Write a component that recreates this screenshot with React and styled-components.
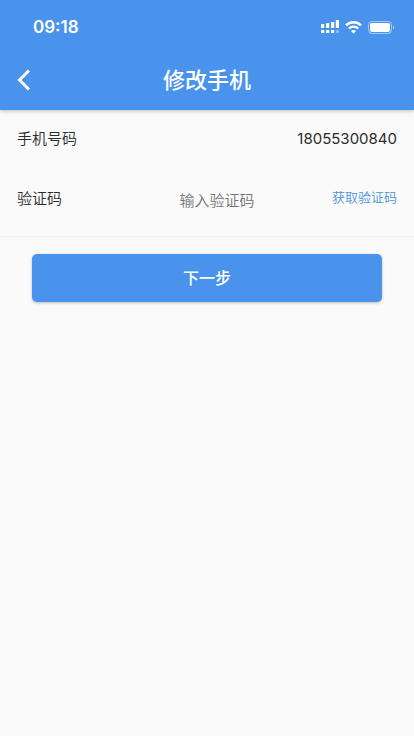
import React, { useState } from "react";
import styled, { createGlobalStyle } from "styled-components";

const GlobalStyle = createGlobalStyle`
  * {
    box-sizing: border-box;
  }
  body {
    margin: 0;
    background-color: #fafafa;
    color: #2b2b2b;
    font-family: Inter, "Noto Sans CJK SC", sans-serif;
    font-size: 15px;
  }
  button,
  input {
    font-family: inherit;
  }
`;

const Header = styled.header`
  background-color: #4a93ec;
  color: white;
  box-shadow: 0 1px 4px rgba(0, 0, 0, 0.25);
`;

const StatusBar = styled.div`
  height: 50px;
  padding: 4px 19px 0 33px;
  display: flex;
  align-items: center;
  justify-content: space-between;
`;

const Time = styled.span`
  font-size: 17px;
  font-weight: 600;
`;

const StatusIcons = styled.div`
  display: flex;
  align-items: center;
  gap: 6px;
`;

const NavBar = styled.div`
  height: 60px;
  padding: 0 10px;
  display: grid;
  grid-template-columns: 48px 1fr 48px;
  align-items: center;
`;

const BackButton = styled.button`
  height: 48px;
  padding: 0 0 0 6px;
  border: none;
  background: none;
  color: white;
  display: flex;
  align-items: center;
  cursor: pointer;
`;

const Title = styled.h1`
  margin: 0;
  font-size: 22px;
  font-weight: 500;
  line-height: 32px;
  text-align: center;
`;

const Form = styled.form`
  display: block;
`;

const Fields = styled.div`
  padding: 0 17px 6px;
  border-bottom: 1px solid #eeeeee;
`;

const Row = styled.div`
  height: 60px;
  padding-bottom: 2px;
  display: flex;
  align-items: center;
  justify-content: space-between;
`;

const Label = styled.label`
  min-width: 85px;
  font-weight: 350;
  line-height: 22px;
`;

const Phone = styled.output`
  line-height: 22px;
`;

const CodeInput = styled.input`
  flex: 1;
  min-width: 0;
  height: 40px;
  padding: 2px 0 0;
  border: none;
  outline: none;
  background: none;
  color: inherit;
  font-size: 15px;
  font-weight: 350;
  text-align: center;
  &::placeholder {
    color: #757575;
    opacity: 1;
  }
`;

const CodeButton = styled.button`
  padding: 0 0 4px;
  border: none;
  background: none;
  color: #4a93dc;
  font-size: 13px;
  font-weight: 350;
  line-height: 20px;
  white-space: nowrap;
  cursor: pointer;
`;

const Actions = styled.div`
  padding: 17px 32px;
`;

const NextButton = styled.button`
  width: 100%;
  height: 48px;
  padding: 0 0 2px;
  border: none;
  border-radius: 5px;
  background-color: #4a93ec;
  color: white;
  font-size: 16px;
  font-weight: 500;
  box-shadow: 0 1px 3px rgba(0, 0, 0, 0.25);
  cursor: pointer;
`;

const SignalIcon = () => (
  <svg width="18" height="14" viewBox="0 0 18 14" fill="white" aria-hidden="true">
    <rect x="0" y="4" width="3.2" height="4" rx="0.6" />
    <rect x="5" y="3" width="3.2" height="5" rx="0.6" />
    <rect x="10" y="2" width="3.2" height="6" rx="0.6" />
    <rect x="14.8" y="0" width="3.2" height="8" rx="0.6" />
    <rect x="0" y="10" width="3.2" height="3" rx="0.6" />
    <rect x="5" y="10" width="3.2" height="3" rx="0.6" />
    <rect x="10" y="10" width="3.2" height="3" rx="0.6" />
    <rect x="14.8" y="10" width="3.2" height="3" rx="0.6" opacity="0.35" />
  </svg>
);

const WifiIcon = () => (
  <svg width="17" height="13" viewBox="0 0 17 13" fill="none" stroke="white" aria-hidden="true">
    <path d="M1 4.4a10.8 10.8 0 0 1 15 0" strokeWidth="2.5" />
    <path d="M3.8 7.5a6.8 6.8 0 0 1 9.4 0" strokeWidth="2.3" />
    <path d="M6 10.1a3.7 3.7 0 0 1 5 0L8.5 12.8z" fill="white" stroke="none" />
  </svg>
);

const BatteryIcon = () => (
  <svg width="27" height="13" viewBox="0 0 27 13" fill="none" aria-hidden="true">
    <rect x="0.5" y="0.5" width="23" height="12" rx="3.5" stroke="white" opacity="0.5" />
    <rect x="2" y="2" width="20" height="9" rx="2" fill="white" />
    <path d="M25 4.5c1.8.6 1.8 3.400 0 4z" fill="white" opacity="0.5" />
  </svg>
);

const BackIcon = () => (
  <svg width="16" height="22" viewBox="0 0 16 22" fill="none" stroke="white" aria-hidden="true">
    <path d="M13 1.500L3.500 11L13 20.500" strokeWidth="3" />
  </svg>
);

const App = () => {
  const [code, setCode] = useState("");

  return (
    <>
      <GlobalStyle />
      <Header>
        <StatusBar>
          <Time>09:18</Time>
          <StatusIcons>
            <SignalIcon />
            <WifiIcon />
            <BatteryIcon />
          </StatusIcons>
        </StatusBar>
        <NavBar>
          <BackButton type="button" aria-label="返回">
            <BackIcon />
          </BackButton>
          <Title>修改手机</Title>
        </NavBar>
      </Header>
      <Form onSubmit={(e) => e.preventDefault()}>
        <Fields>
          <Row>
            <Label htmlFor="phone">手机号码</Label>
            <Phone id="phone">18055300840</Phone>
          </Row>
          <Row>
            <Label htmlFor="code">验证码</Label>
            <CodeInput
              id="code"
              inputMode="numeric"
              placeholder="输入验证码"
              value={code}
              onChange={(e) => setCode(e.target.value)}
            />
            <CodeButton type="button">获取验证码</CodeButton>
          </Row>
        </Fields>
        <Actions>
          <NextButton type="submit">下一步</NextButton>
        </Actions>
      </Form>
    </>
  );
};

export default App;
